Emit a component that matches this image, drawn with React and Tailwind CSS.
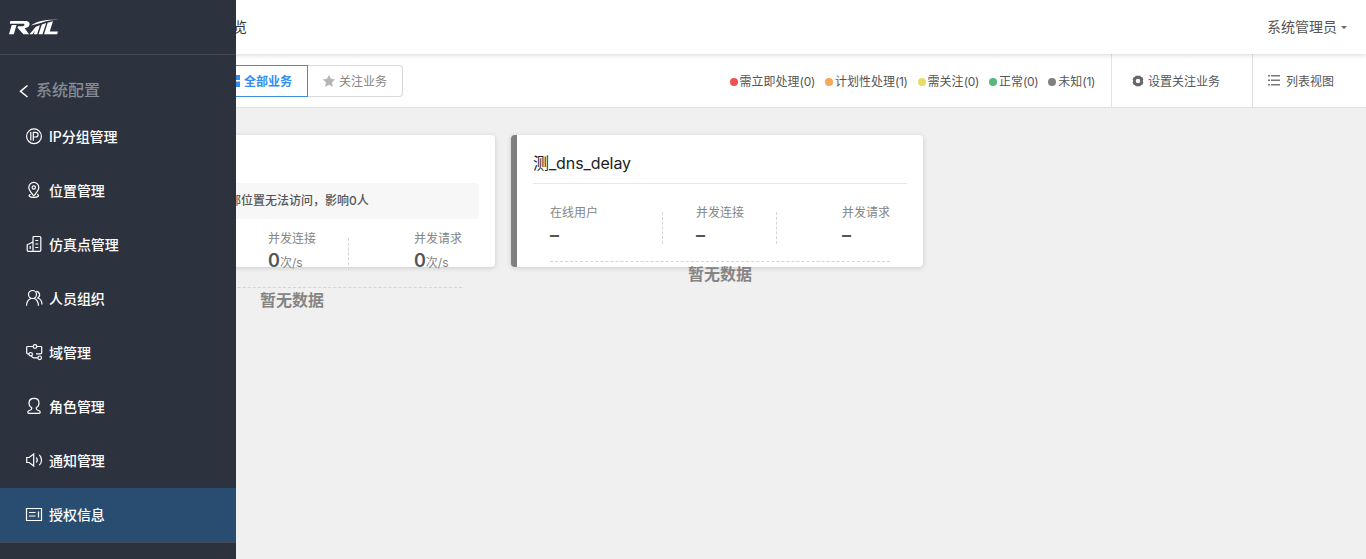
import React from "react";

const stroke = {
  width: 18,
  height: 18,
  viewBox: "0 0 18 18",
  fill: "none",
  stroke: "currentColor",
  strokeWidth: 1.2,
};

const icons = {
  ip: (
    <svg {...stroke}>
      <circle cx="9" cy="9.300" r="7.4" />
      <path d="M5.800 5.100v8.400M8.300 13.800V5.300h2.400a2.300 2.300 0 0 1 0 4.700H8.300" />
    </svg>
  ),
  place: (
    <svg {...stroke}>
      <path d="M8.800 14.800C6 11.400 3.800 9.200 3.800 6.400a5 5 0 0 1 10 0c0 2.800-2.200 5-5 8.400z" />
      <circle cx="8.800" cy="6.500" r="1.700" />
      <path d="M5.600 13.200c-3 1.200-1.200 3.200 3.200 3.200s6.200-2 3.200-3.200" />
    </svg>
  ),
  building: (
    <svg {...stroke}>
      <path d="M8 16.300V2.500a1 1 0 0 1 1-1h5.800a1 1 0 0 1 1 1v12.800a1 1 0 0 1-1 1H3.200a1 1 0 0 1-1-1V9.800L8 7M5.200 11v3M10.300 5.500h3M10.300 9h3M10.300 12.500h3" />
    </svg>
  ),
  people: (
    <svg {...stroke}>
      <circle cx="7.500" cy="5.500" r="4" />
      <path d="M1.500 16.800c0-3.800 1.600-6.300 4.800-7.600M8.800 9.200c3.100 1.300 4.700 4 4.700 7.600M11.300 2.400c3.700.3 4.400 4.900 1.500 6.600 2.900 1 4.100 3.300 4.200 6.500" />
    </svg>
  ),
  domain: (
    <svg {...stroke}>
      <path d="M8.200 3.500H2.700a1 1 0 0 0-1 1v5.300a1 1 0 0 0 1 1H4M12 3.500h3.700a1 1 0 0 1 1 1v5.300a1 1 0 0 1-1 1h-4.700M6.300 12.800c.6 1.400 1.400 2 2.600 2h4" />
      <circle cx="10" cy="3.500" r="1.800" />
      <circle cx="5.700" cy="11.200" r="1.700" />
      <circle cx="14.700" cy="14.800" r="1.800" />
    </svg>
  ),
  role: (
    <svg {...stroke}>
      <path d="M6.700 10.500C4.800 9.600 4 8 4 6.200c0-2.900 2-4.800 5-4.800s5 1.900 5 4.800c0 1.800-.8 3.400-2.700 4.300M6.700 10.500c.5 2-.6 2.500-2.400 3C2.500 14.100 2.200 16.300 4 16.300h10c1.800 0 1.500-2.200-.3-2.800-1.800-.5-2.900-1-2.400-3" />
    </svg>
  ),
  sound: (
    <svg {...stroke}>
      <path d="M1.700 6.500h2.500L8.700 3v12l-4.500-3.500H1.700zM11.300 6.500c1.200 1.500 1.200 3.500 0 5M14.300 3.800c3 3 3 7.400 0 10.400" />
    </svg>
  ),
  license: (
    <svg {...stroke}>
      <path d="M1.500 3.500h15v12h-15zM4 7.500h6.500M4 11h6.500M13.500 6.500v6" />
    </svg>
  ),
};

const menu = [
  ["ip", "IP分组管理"],
  ["place", "位置管理"],
  ["building", "仿真点管理"],
  ["people", "人员组织"],
  ["domain", "域管理"],
  ["role", "角色管理"],
  ["sound", "通知管理"],
  ["license", "授权信息"],
];

function Logo() {
  return (
    <svg width="50" height="16" viewBox="0 0 50 16" fill="#fff">
      <path d="M1.300 2H17c4.200 0 4.700 4.300 1.700 6.200-.8.500-1.800.8-3 1L20 15.300h-5.600L8.500 8.800l.5-1.500h4.500c2 0 2.700-2.500.8-2.500H.8z" />
      <path d="M2.700 6h4.800L4.800 15.300H0z" />
      <path d="M22 6.500C29 1.500 38 .2 49.500.8 42 1.200 38 1.900 34 3.200c-4.500 1.300-8 2.100-12 3.300z" />
      <path d="M20.500 15.300l6.300-7.500 4.200-1.500-2.900 9h-3.300l1-3.300-2.300 3.300zM29.600 15.300l3.200-9.700 4.400-1.500-3.700 11.200zM35 15.300l3.700-11.500 5.300-1.500-3.300 10.200h8.300l-.9 2.800z" />
    </svg>
  );
}

function Drawer() {
  return (
    <aside className="absolute inset-y-0 left-0 z-10 w-[236px] overflow-hidden bg-[#2c333f] text-white">
      <div className="flex h-[55px] items-center border-b border-[#424852] pl-[9px]">
        <Logo />
      </div>
      <div className="flex h-[55px] items-center gap-[7px] pt-4 pl-[19px] text-base font-medium text-[#878b92]">
        <svg width="10" height="14" viewBox="0 0 10 14" fill="none" stroke="#fff" strokeWidth="1.500">
          <path d="M8.500 1.500 1.500 7.300l7 5.700" />
        </svg>
        <span className="pb-[2px]">系统配置</span>
      </div>
      <nav>
        {menu.map(([icon, label]) => (
          <div
            key={icon}
            className={
              "flex h-[54px] items-center gap-[6px] pl-[25px] text-sm font-medium " +
              (icon === "license" ? "bg-[#294d70]" : "")
            }
          >
            <span className="pb-[2px]">{icons[icon]}</span>
            <span className="tracking-[-0.05px]">{label}</span>
          </div>
        ))}
      </nav>
      <div className="border-t border-[#424852]" />
    </aside>
  );
}

const statuses = [
  ["bg-[#ee5253]", "需立即处理", "(0)"],
  ["bg-[#f5a855]", "计划性处理", "(1)"],
  ["bg-[#e8dc62]", "需关注", "(0)"],
  ["bg-[#54b87c]", "正常", "(0)"],
  ["bg-[#808080]", "未知", "(1)"],
];

function Toolbar() {
  return (
    <div className="flex h-[54px] border-b border-[#e2e2e2] bg-white text-xs text-[#555]">
      <div className="flex flex-1 items-center pt-px">
        <div className="ml-[212px] flex h-8 w-24 items-center gap-1 border border-[#3b8fe8] pl-[15px] font-bold text-[#2f8df5]">
          <svg width="12" height="12" viewBox="0 0 12 12" fill="currentColor">
            <path d="M0 0h5v5H0zM6.500 0h5.500v5H6.500zM0 6.500h5V12H0zM6.500 6.500h5.500V12H6.500z" />
          </svg>
          <span className="pt-[2px]">全部业务</span>
        </div>
        <div className="flex h-8 w-[95px] items-center gap-1 rounded-r border border-l-0 border-[#d9d9d9] pl-[15px] text-[#858585]">
          <svg width="12" height="12" viewBox="0 0 12 12" fill="#b5b5b5" stroke="#b5b5b5" strokeWidth="0.500">
            <path d="M6 .5l1.800 3.500 3.900.6-2.900 2.800.7 4L6 9.500l-3.500 1.900.7-4L.3 4.600l3.900-.6z" />
          </svg>
          <span className="pt-[2px]">关注业务</span>
        </div>
      </div>
      <div className="flex items-center gap-[10px] pt-[2px] pr-4">
        {statuses.map(([color, label, count]) => (
          <span key={label} className="flex items-center">
            <i className={"mr-[2px] size-2 rounded-full " + color} />
            <span>{label}</span>
            <span className="tracking-[-0.33px]">{count}</span>
          </span>
        ))}
      </div>
      <div className="flex w-[141px] items-center gap-1 border-l border-[#e2e2e2] pl-5">
        <svg width="12" height="12" viewBox="0 0 12 12">
          <path
            fillRule="evenodd"
            fill="#666"
            d="M3.700.8h4.600l.7 1.300h1.200l1.200 2.500-.7 1.400.7 1.400-1.200 2.500H9l-.7 1.300H3.700L3 9.900H1.800L.6 7.400 1.300 6 .6 4.600l1.200-2.500H3zM6 3.700a2.300 2.300 0 1 0 0 4.600 2.300 2.300 0 0 0 0-4.600z"
          />
        </svg>
        <span className="pt-[2px]">设置关注业务</span>
      </div>
      <div className="flex w-[114px] items-center gap-[5px] border-l border-[#e2e2e2] pl-[14px]">
        <svg width="14" height="12" viewBox="0 0 14 12" fill="#777">
          <path d="M1 0h2v1.500H1zM4 0h9v1.500H4zM1 4.500h2V6H1zM4 4.500h9V6H4zM1 9h2v1.500H1zM4 9h9v1.500H4z" />
        </svg>
        <span className="pt-[3px]">列表视图</span>
      </div>
    </div>
  );
}

function Metric({ label, value, unit }) {
  return (
    <div>
      <div className="h-[18px] text-xs leading-[18px] text-[#858585]">{label}</div>
      <div className="flex h-6 items-baseline pt-px text-lg leading-6 font-semibold text-[#555]">
        {value}
        <span className="text-xs font-normal text-[#858585]">{unit}</span>
      </div>
    </div>
  );
}

function ServiceCard({ title, alert, metrics }) {
  return (
    <section className="h-[132px] w-[412px] rounded border-l-[6px] border-[#808080] bg-white px-4 shadow-[0_1px_5px_rgba(0,0,0,0.16)]">
      <h2 className="flex h-12 items-center pt-[7px] text-base text-[#222]">
        <span className="tracking-[-0.1px]">{title}</span>
      </h2>
      {alert ? (
        <div className="flex h-9 items-center rounded-sm bg-[#f7f7f7] pl-[124px] text-xs font-medium whitespace-nowrap text-[#555]">
          {alert}
        </div>
      ) : (
        <div className="mb-[9px] border-t border-[#e8e8e8]" />
      )}
      <div className="mx-[17px] flex h-[69px] items-start border-b border-dashed border-[#d5d5d5] pt-[11px]">
        <div className="w-[113px]">{metrics[0] && <Metric {...metrics[0]} />}</div>
        <div className="mt-[8px] -ml-px h-8 border-l border-dashed border-[#d5d5d5]" />
        <div className="w-[113px] pl-[33px]">
          <Metric {...metrics[1]} />
        </div>
        <div className="mt-[8px] h-8 border-l border-dashed border-[#d5d5d5]" />
        <div className="flex flex-1 justify-end">
          <Metric {...metrics[2]} />
        </div>
      </div>
      <div className="text-center text-base leading-6 font-bold text-[#858585]">暂无数据</div>
    </section>
  );
}

export default function App() {
  return (
    <div className="relative h-[559px] w-[1366px] overflow-hidden bg-[#f0f0f0] font-[Inter,'Noto_Sans_CJK_SC',sans-serif]">
      <Drawer />
      <header className="relative flex h-[54px] items-center justify-between bg-white pr-[19px] pl-[233px] text-sm text-[#555] shadow-[0_1px_5px_rgba(0,0,0,0.16)]">
        <span className="text-[#333]">览</span>
        <span className="flex items-center gap-1">
          系统管理员
          <i className="border-x-[3px] border-t-[3px] border-x-transparent border-t-[#666]" />
        </span>
      </header>
      <Toolbar />
      <main className="flex gap-4 pt-[27px] pl-[83px]">
        <ServiceCard
          alert="部位置无法访问，影响0人"
          metrics={[
            null,
            { label: "并发连接", value: "0", unit: "次/s" },
            { label: "并发请求", value: "0", unit: "次/s" },
          ]}
        />
        <ServiceCard
          title="测_dns_delay"
          metrics={[
            { label: "在线用户", value: "–" },
            { label: "并发连接", value: "–" },
            { label: "并发请求", value: "–" },
          ]}
        />
      </main>
    </div>
  );
}
